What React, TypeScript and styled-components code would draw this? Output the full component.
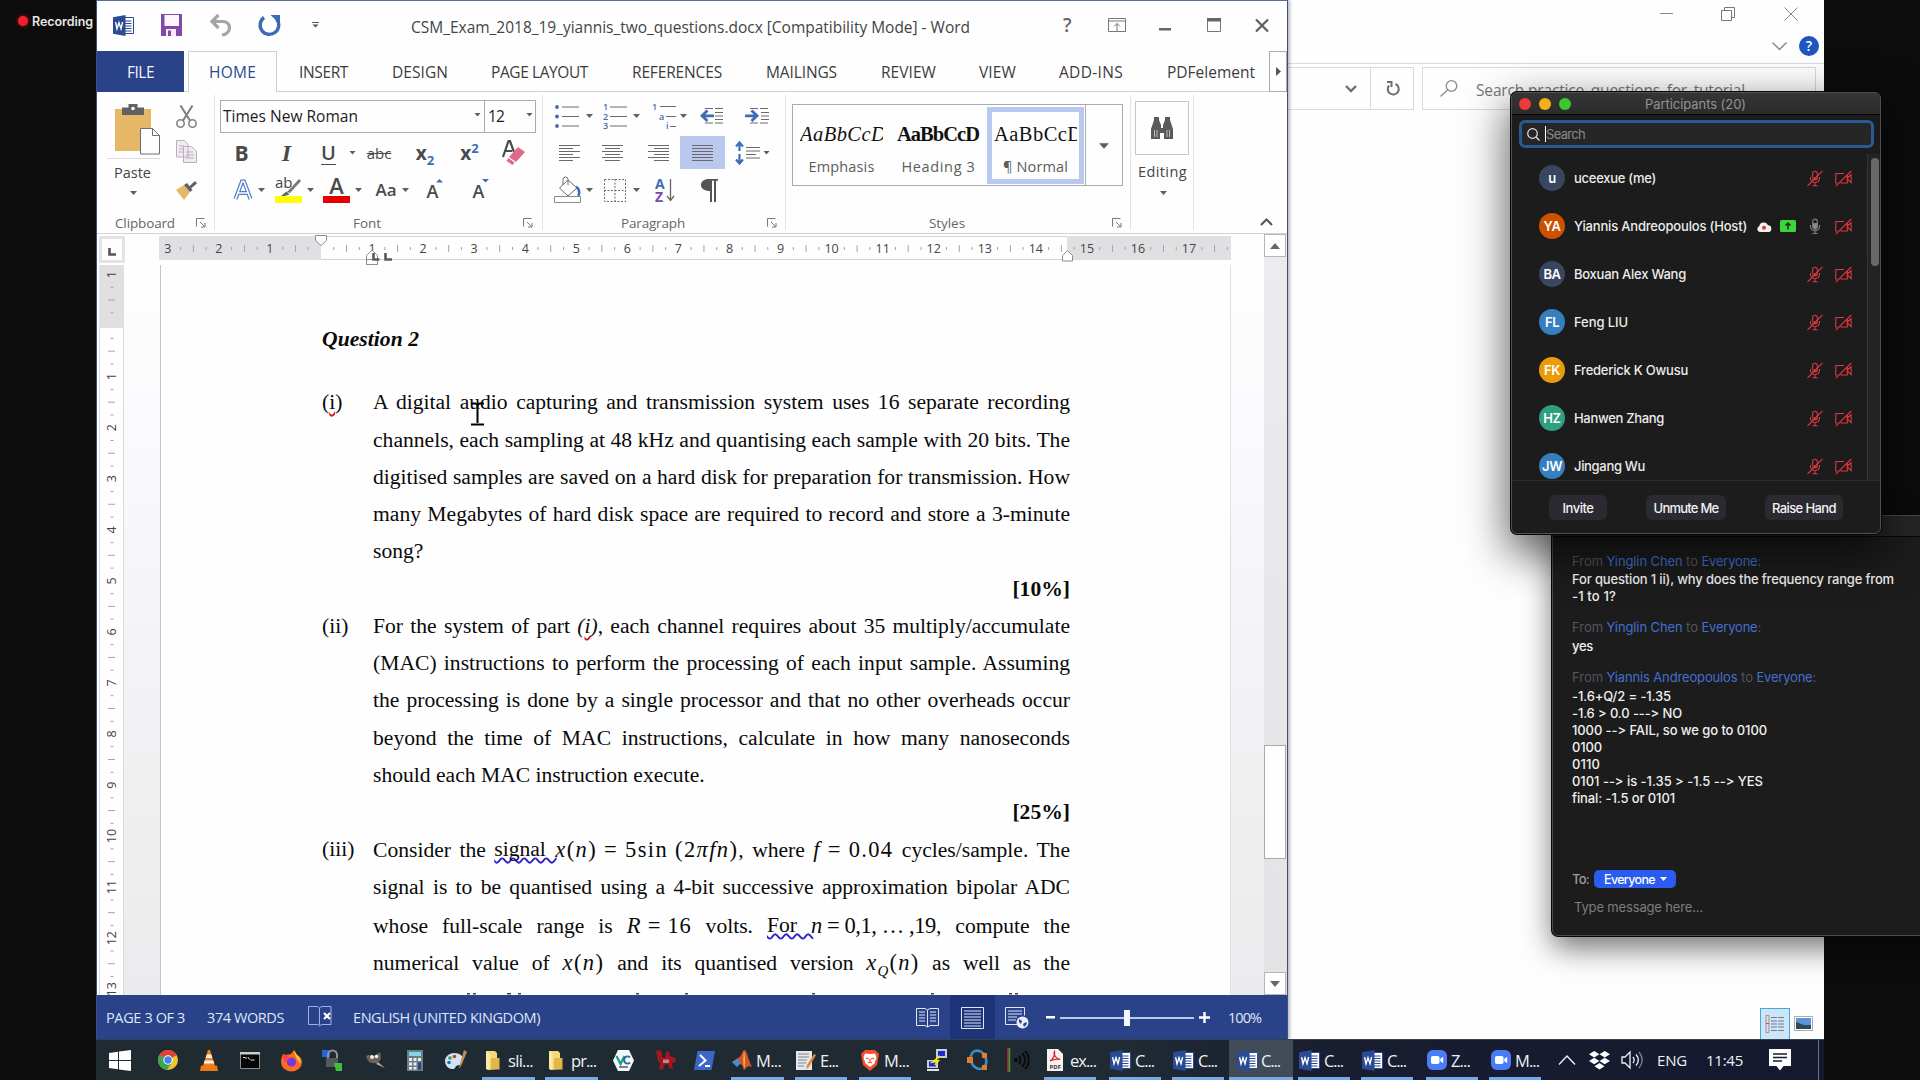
import React, { useLayoutEffect, useRef, useState } from 'react';
import styled, { createGlobalStyle, css } from 'styled-components';

const UI = `"Open Sans", "Noto Sans", sans-serif`;
const MAC = `Inter, "Liberation Sans", sans-serif`;
const SERIF = `"Liberation Serif", "Times New Roman", serif`;

const Global = createGlobalStyle`
  *, *::before, *::after { box-sizing: border-box; }
  html, body { margin: 0; padding: 0; background: #0c0c0c; overflow: hidden; }
`;

/* ---------- shared parts ---------- */

const Desktop = styled.main`
  position: relative;
  width: 1920px;
  height: 1080px;
  overflow: hidden;
  background: #0c0c0c;
  font-family: ${UI};
`;

const FitSpan = styled.span<{ $ml?: number; $mt?: number; $size?: number; $color?: string; $weight?: number; $inline?: boolean; $font?: string }>`
  display: inline-block;
  flex: none;
  white-space: pre;
  text-align: left;
  text-align-last: left;
  font-variant-ligatures: none;
  font-feature-settings: "calt" 0;
  margin-left: ${p => p.$ml || 0}px;
  ${p => p.$mt && css`margin-top: ${p.$mt}px;`}
  ${p => p.$size && css`font-size: ${p.$size}px;`}
  ${p => p.$color && css`color: ${p.$color};`}
  ${p => p.$weight && css`font-weight: ${p.$weight};`}
  ${p => p.$font && css`font-family: ${p.$font};`}
`;

type FitProps = { w: number; ml?: number; mt?: number; size?: number; color?: string; weight?: number; font?: string; children: React.ReactNode };

/* A label whose tracking is computed so that it fills its slot. */
function Fit({ w, ml, mt, size, color, weight, font, children }: FitProps) {
  const ref = useRef<HTMLSpanElement>(null);
  const [tracking, setTracking] = useState(0);
  useLayoutEffect(() => {
    const el = ref.current!;
    const range = document.createRange();
    range.selectNodeContents(el);
    const natural = range.getBoundingClientRect().width;
    const n = (el.textContent || '').length;
    setTracking((w - natural) / Math.max(1, n));
  }, []);
  return (
    <FitSpan ref={ref} $ml={ml} $mt={mt} $size={size} $color={color} $weight={weight} $font={font} style={{ width: w, letterSpacing: tracking }}>
      {children}
    </FitSpan>
  );
}

const Icon = styled.svg<{ $ml?: number; $mt?: number }>`
  display: block;
  flex: none;
  overflow: visible;
  margin-left: ${p => p.$ml || 0}px;
  margin-top: ${p => p.$mt || 0}px;
`;

const Caret = styled.i<{ $ml?: number; $mt?: number; $size?: number; $color?: string }>`
  flex: none;
  width: ${p => (p.$size || 3.5) * 2}px;
  height: ${p => (p.$size || 3.5) + 0.5}px;
  margin-left: ${p => p.$ml || 0}px;
  margin-top: ${p => p.$mt || 0}px;
  background: ${p => p.$color || '#5e5e5e'};
  clip-path: polygon(0 0, 100% 0, 50% 100%);
`;

const Row = styled.div<{ $h?: number }>`
  display: flex;
  align-items: center;
  flex: none;
  ${p => p.$h && css`height: ${p.$h}px;`}
`;

/* ---------- recording badge ---------- */

const Recording = styled.div`
  display: flex;
  align-items: center;
  gap: 4px;
  width: 96px;
  height: 42px;
  padding-left: 17.5px;
  color: #e6e6e6;
  font-family: ${MAC};
`;
const RecDot = styled.span`
  width: 10.5px;
  height: 10.5px;
  border-radius: 50%;
  background: #f3202b;
  box-shadow: 0 0 4px #b0151d;
`;

/* ---------- explorer window ---------- */

const Explorer = styled.section`
  position: absolute;
  left: 1288px;
  top: 0;
  width: 536px;
  height: 1039px;
  display: flex;
  flex-direction: column;
  background: #fefefe;
`;
const ExpTitle = styled.div`
  display: flex;
  height: 28px;
  align-items: center;
`;
const ExpRibbon = styled.div`
  display: flex;
  align-items: center;
  height: 36px;
  border-bottom: 1px solid #d9dade;
`;
const HelpDot = styled.span`
  margin-left: 12px;
  width: 20px;
  height: 20px;
  border-radius: 50%;
  background: #1f55bf;
  color: #fff;
  font: 600 14px/20px ${UI};
  text-align: center;
`;
const ExpBar = styled.div`
  display: flex;
  margin-top: 3px;
  height: 43px;
`;
const AddressBox = styled.div`
  display: flex;
  align-items: center;
  width: 126px;
  border: 1px solid #dadadd;
  border-left: 0;
`;
const AddressDivider = styled.span`
  margin-left: 13px;
  width: 1px;
  height: 41px;
  background: #dadadd;
`;
const ExpSearch = styled.div`
  display: flex;
  align-items: center;
  margin-left: 8px;
  width: 394px;
  border: 1px solid #dadadd;
`;
const ExpViews = styled.div`
  display: flex;
  align-items: center;
  margin-top: auto;
  padding-left: 472px;
`;
const ViewSelected = styled.div`
  display: flex;
  align-items: center;
  justify-content: center;
  width: 30px;
  height: 31px;
  background: #cbe6f6;
  border: 1px solid #4aa5dc;
  border-bottom: 0;
`;

/* ---------- word window ---------- */

const Word = styled.section`
  position: absolute;
  left: 96px;
  top: 0;
  width: 1192px;
  height: 1039px;
  display: flex;
  flex-direction: column;
  background: #fefefe;
  border: solid #3b4f86;
  border-width: 1px 1px 0 1px;
  border-top-color: #5a6c9e;
  box-shadow: 2px 0 3px rgba(60, 60, 80, 0.35);
`;
const TitleBar = styled.header`
  display: flex;
  align-items: center;
  flex: none;
  height: 50px;
  padding-bottom: 2px;
  color: #444;
`;
const Tabs = styled.nav`
  display: flex;
  align-items: center;
  flex: none;
  height: 41px;
  padding-top: 1px;
  color: #3c3c3c;
  font-size: 15.5px;
  box-shadow: inset 0 -1px #d0d0d2;
`;
const FileTab = styled.div`
  display: flex;
  align-items: center;
  width: 87px;
  height: 41px;
  margin-top: -1px;
  padding: 1px 0 0 30px;
  background: #2a4288;
  color: #f1f4fb;
`;
const HomeTab = styled.div`
  display: flex;
  align-items: center;
  width: 89px;
  height: 41px;
  margin: -1px 0 0 4px;
  padding-left: 20px;
  border: 1px solid #d0d0d2;
  border-bottom: 0;
  background: #fefefe;
  color: #2b4a94;
`;
const TabScroll = styled.div`
  display: flex;
  align-items: center;
  justify-content: center;
  width: 18px;
  height: 41px;
  margin: -1px 0 0 14px;
  border: 1px solid #ababab;
`;
const Ribbon = styled.div`
  display: flex;
  flex: none;
  height: 142px;
  border-bottom: 1px solid #d3d3d5;
`;
const Group = styled.div<{ $w: number }>`
  display: flex;
  flex-direction: column;
  flex: none;
  width: ${p => p.$w}px;
  background: linear-gradient(#e2e2e3, #e2e2e3) right 0 top 3px / 1px 135px no-repeat;
`;
const GroupBody = styled.div`
  display: flex;
  flex: none;
  height: 120px;
`;
const Rows = styled.div`
  flex: none;
  height: 120px;
  padding-top: 8px;
`;
const GroupFooter = styled.div`
  display: flex;
  align-items: center;
  height: 22px;
  color: #666;
  font-size: 13.5px;
`;
const PasteCol = styled.div`
  display: flex;
  flex-direction: column;
  width: 53px;
  margin: 12px 0 0 10px;
  font-size: 14.5px;
  color: #444;
`;
const PasteRule = styled.div`
  height: 1px;
  margin: 4px 0 3px;
  background: #dcdcdd;
`;
const ClipCol = styled.div`
  display: flex;
  flex-direction: column;
  width: 22px;
  margin: 13px 0 0 16px;
`;
const Combo = styled.div<{ $w: number; $open?: boolean }>`
  display: flex;
  align-items: center;
  width: ${p => p.$w}px;
  height: 33px;
  border: 1px solid #ababab;
  ${p => p.$open && css`border-left: 0;`}
  color: #1c1c1c;
`;
const Glyph = styled.span<{ $ml: number; $w: number; $size: number; $serif?: boolean; $italic?: boolean; $under?: boolean; $strike?: boolean; $weight?: number }>`
  flex: none;
  margin-left: ${p => p.$ml}px;
  width: ${p => p.$w}px;
  font: ${p => (p.$italic ? 'italic' : 'normal')} ${p => p.$weight || 700} ${p => p.$size}px/24px ${p => (p.$serif ? SERIF : UI)};
  color: #4a4a4a;
  text-align: center;
  white-space: nowrap;
  ${p => p.$under && css`text-decoration: underline; text-decoration-thickness: 1px; text-underline-offset: 4px;`}
  ${p => p.$strike && css`text-decoration: line-through; text-decoration-thickness: 1px;`}
  sub, sup { color: #3e6db5; font-size: 13px; line-height: 0; }
`;
const JustifyActive = styled.div`
  display: flex;
  align-items: center;
  justify-content: center;
  width: 45px;
  height: 33px;
  margin-left: 11px;
  background: #b9c8ec;
`;
const Gallery = styled.div`
  display: flex;
  width: 331px;
  height: 82px;
  margin: 12px 0 0 6px;
  border: 1px solid #ababab;
`;
const StyleCard = styled.div<{ $ml?: number; $on?: boolean }>`
  display: flex;
  flex-direction: column;
  align-items: center;
  width: 97px;
  height: 77px;
  margin: 2px 0 0 ${p => p.$ml || 0}px;
  border: 5px solid ${p => (p.$on ? '#b9c8ec' : 'transparent')};
  color: #5c5c5c;
  font-size: 14.5px;
`;
const Sample = styled.div<{ $bold?: boolean; $italic?: boolean }>`
  width: 83px;
  height: 28px;
  margin: 9px 0 8px;
  overflow: hidden;
  white-space: nowrap;
  color: #111;
  font: ${p => (p.$italic ? 'italic' : 'normal')} ${p => (p.$bold ? 700 : 400)} 20.5px/26px ${SERIF};
  letter-spacing: ${p => (p.$bold ? 0 : 0.45)}px;
`;
const CardLabel = styled.div`
  line-height: 19px;
`;
const GalleryMore = styled.div`
  display: flex;
  align-items: center;
  justify-content: center;
  width: 37px;
  margin-left: auto;
  border-left: 1px solid #ababab;
`;
const EditCol = styled.div`
  display: flex;
  flex-direction: column;
  margin: 9px 0 0 4px;
  font-size: 14.5px;
  color: #444;
`;
const EditBox = styled.div`
  display: flex;
  align-items: center;
  justify-content: center;
  width: 54px;
  height: 54px;
  margin-bottom: 7px;
  border: 1px solid #c6c6c8;
`;
const RibbonEnd = styled.div`
  display: flex;
  align-items: flex-end;
  padding: 0 0 7px 66px;
`;

/* ---------- workspace ---------- */

const Workspace = styled.div`
  display: grid;
  grid-template-columns: 27px 1140px 23px;
  grid-template-rows: 31px 1fr;
  flex: 1;
  min-height: 0;
`;
const TabPicker = styled.div`
  margin: 2px 0 0 2px;
  width: 26px;
  height: 27px;
  border: 3px solid #e3e3e5;
  background: #fefefe;
`;
const HRuler = styled.div`
  padding: 2px 0 0 35px;
`;
const VRuler = styled.div`
  padding-left: 2px;
  overflow: hidden;
`;
const Canvas = styled.div`
  padding-left: 36px;
  overflow: hidden;
  background: linear-gradient(#fefefe 0%, #fbfbfd 18%, #f4f3f6 50%, #efeff0 75%, #ebeaec 100%);
`;
const Page = styled.article`
  width: 1071px;
  height: 731px;
  padding: 56px 0 0 161px;
  overflow: hidden;
  background: #fefefe;
  border: solid #c4c4c6;
  border-width: 0 1px;
  border-right-color: #e0e0e2;
  color: #0a0a0a;
  font: 21.6px/37.3px ${SERIF};
`;
const Heading = styled.h2`
  margin: 0 0 26px;
  font: italic 700 21.6px/37.3px ${SERIF};
`;
const Item = styled.div`
  display: grid;
  grid-template-columns: 51px 697px;
`;
const Line = styled.div<{ $end?: boolean; $mark?: boolean; $tall?: boolean }>`
  height: ${p => (p.$tall ? 38.1 : 37.25)}px;
  white-space: nowrap;
  text-align: ${p => (p.$mark ? 'right' : 'left')};
  ${p => !p.$end && !p.$mark && css`white-space: normal; text-align: justify; text-align-last: justify;`}
  ${p => p.$mark && css`font-weight: 700;`}
`;
const Wavy = styled.span<{ $c: string; $w?: number }>`
  ${p => p.$w && css`display: inline-block; width: ${p.$w}px; height: 37px; vertical-align: top;`}
  white-space: pre;
  text-align: left;
  text-align-last: left;
  text-decoration: underline wavy ${p => p.$c} 1.5px;
  text-underline-offset: 1px;
  text-decoration-skip-ink: none;
`;
const Sub = styled.sub`
  font-size: 15px;
  line-height: 0;
`;
const Scroll = styled.div`
  display: flex;
  flex-direction: column;
  grid-column: 3;
  grid-row: 1 / 3;
  background: linear-gradient(#ecebee, #e3e3e5);
`;
const ScrollBtn = styled.div`
  display: flex;
  align-items: center;
  justify-content: center;
  width: 22px;
  height: 23px;
  border: 1px solid #b5b5b8;
  background: #fefefe;
`;
const Thumb = styled.div`
  width: 22px;
  height: 114px;
  margin: 488px 0 auto;
  border: 1px solid #a9a9ac;
  background: #fefefe;
`;
const IBeam = styled.svg`
  position: absolute;
  left: 374px;
  top: 401px;
`;
const Status = styled.footer`
  display: flex;
  align-items: center;
  flex: none;
  height: 44px;
  padding-top: 1px;
  background: #2a4289;
  color: #dde7f7;
  font-size: 14.5px;
`;
const ActiveView = styled.div`
  display: flex;
  align-items: center;
  width: 45px;
  height: 44px;
  margin: -1px 0 0 11px;
  padding: 1px 0 0 11px;
  background: #1f3478;
`;
const Slider = styled.div`
  display: flex;
  align-items: center;
  justify-content: center;
  width: 134px;
  height: 16px;
  margin-left: 5px;
  background: linear-gradient(#b9c9ec, #b9c9ec) center / 100% 2px no-repeat;
`;
const Knob = styled.span`
  width: 6px;
  height: 16px;
  background: #f4f8fe;
`;

/* ---------- taskbar ---------- */

const Taskbar = styled.div`
  position: absolute;
  left: 96px;
  top: 1039px;
  width: 1728px;
  height: 41px;
  display: flex;
  align-items: center;
  border-top: 1px solid #35414d;
  background: linear-gradient(90deg, #1f2b31 0%, #1f2a33 60%, #181d30 72%, #151930 100%);
  color: #eef1f4;
  font-size: 16.5px;
`;
const Task = styled.div<{ $ml: number; $w: number; $pad: number; $on?: boolean }>`
  display: flex;
  align-items: center;
  flex: none;
  width: ${p => p.$w}px;
  height: 40px;
  margin-left: ${p => p.$ml}px;
  padding-left: ${p => p.$pad}px;
  background: ${p => (p.$on ? '#414b57' : 'transparent')};
  box-shadow: inset 0 -3px #76a9e6;
`;
const DesktopEdge = styled.span`
  width: 1px;
  height: 40px;
  margin-left: 27px;
  background: #6b7084;
`;

/* ---------- zoom windows ---------- */

const Chat = styled.section`
  position: absolute;
  left: 1552px;
  top: 515px;
  width: 375px;
  height: 421px;
  display: flex;
  flex-direction: column;
  border: 1px solid #4c4c4c;
  border-radius: 6px;
  background: #1c1c1c;
  box-shadow: 0 0 0 1px #060606, 0 12px 30px rgba(0, 0, 0, 0.55);
  font: 500 13px/17px ${MAC};
  color: #f0f0f0;
`;
const ChatTitle = styled.div`
  flex: none;
  height: 21px;
  border-bottom: 1px solid #070707;
  border-radius: 6px 6px 0 0;
  background: #262626;
`;
const ChatLog = styled.div`
  display: flex;
  flex-direction: column;
  align-items: flex-start;
  padding: 15.5px 0 0 19px;
  height: 324px;
`;
const From = styled.div<{ $mt?: number }>`
  display: flex;
  height: 17px;
  margin: ${p => p.$mt || 0}px 0 1.5px;
  color: #56545f;
  font-weight: 400;
`;
const ToRow = styled.div`
  display: flex;
  align-items: center;
  height: 20px;
  margin-top: 8px;
  padding-left: 19px;
  color: #9c9aa6;
`;
const ToPill = styled.div`
  display: flex;
  align-items: center;
  width: 82px;
  height: 18px;
  margin-left: 5px;
  padding-left: 10px;
  border-radius: 5px;
  background: #2a5cf0;
  color: #fff;
`;
const Compose = styled.div`
  display: flex;
  margin-top: 9.5px;
  padding-left: 21px;
  color: #7d7d7d;
  font-weight: 400;
`;

const Participants = styled.section`
  position: absolute;
  left: 1511px;
  top: 92px;
  width: 370px;
  height: 442px;
  display: flex;
  flex-direction: column;
  border: 1px solid #505050;
  border-radius: 6px;
  background: #1c1c1c;
  box-shadow: 0 0 0 1px #060606, 0 16px 44px 4px rgba(0, 0, 0, 0.62);
  font: 500 13px/16px ${MAC};
  color: #ececec;
`;
const PTitle = styled.div`
  display: flex;
  align-items: center;
  flex: none;
  height: 22px;
  padding-left: 7px;
  gap: 8px;
  border-bottom: 1px solid #050505;
  border-radius: 5px 5px 0 0;
  background: linear-gradient(#353535, #2b2b2b);
`;
const Light = styled.span<{ $c: string }>`
  width: 12px;
  height: 12px;
  border-radius: 50%;
  background: ${p => p.$c};
`;
const PSearch = styled.div`
  display: flex;
  align-items: center;
  flex: none;
  width: 355px;
  height: 28px;
  margin: 5px 0 0 7px;
  padding-left: 5px;
  border: 3.5px solid #2a5a96;
  border-radius: 6px;
  background: #262626;
  font-weight: 400;
`;
const TextCaret = styled.span`
  width: 1px;
  height: 16px;
  margin-left: 5px;
  background: #fff;
`;
const PBody = styled.div`
  display: flex;
  flex: none;
  height: 328px;
  margin-top: 5px;
  border-bottom: 1px solid #2b2b2b;
  overflow: hidden;
`;
const PList = styled.div`
  width: 355px;
  padding-top: 1px;
`;
const PTrack = styled.div`
  width: 13px;
  margin-top: 1px;
  padding: 4px 0 0 3px;
  border-left: 1px solid #363636;
  background: #232323;
`;
const PThumb = styled.div`
  width: 8px;
  height: 108px;
  border-radius: 4px;
  background: #686868;
`;
const PRow = styled.div`
  display: flex;
  align-items: center;
  height: 48px;
  padding-left: 27px;
`;
const Avatar = styled.span<{ $c: string }>`
  flex: none;
  width: 26px;
  height: 26px;
  margin-right: 9px;
  border-radius: 50%;
  background: ${p => p.$c};
  color: #fff;
  font: 600 13px/27px ${MAC};
  letter-spacing: -0.4px;
  text-align: center;
`;
const PIcons = styled.div`
  display: flex;
  align-items: center;
  margin-left: auto;
  padding-right: 15px;
`;
const PFooter = styled.div`
  display: flex;
  padding: 14px 0 0 37px;
`;
const PButton = styled.button<{ $w: number; $ml?: number }>`
  display: flex;
  align-items: center;
  justify-content: center;
  width: ${p => p.$w}px;
  height: 25px;
  margin-left: ${p => p.$ml || 0}px;
  padding: 1px 0 0;
  border: 0;
  border-radius: 6px;
  background: #2a2a30;
  color: #f2f2f2;
  font: 500 13px/16px ${MAC};
`;

/* ---------- drawings ---------- */

const WordLogo = ({ ml = 0, size = 21 }: { ml?: number; size?: number }) => (
  <Icon $ml={ml} width={size} height={size} viewBox="0 0 21 21">
    <path d="M11 2.5h9.5v16H11z" fill="#fff" stroke="#2b4a94" strokeWidth="1" />
    <path d="M12 6h6.5M12 8.5h6.5M12 11h6.5M12 13.5h6.5M12 16h6.5" stroke="#2b4a94" strokeWidth="1" />
    <path d="M0 2.3L12.5 0v21L0 18.7z" fill="#2b4a94" />
    <path d="M2.6 7.2l1.4 6.6 2-6 2 6 1.6-6.8" fill="none" stroke="#fff" strokeWidth="1.4" />
  </Icon>
);

const Lines = ({ ml = 0, rows }: { ml?: number; rows: [number, number][] }) => (
  <Icon $ml={ml} width="21" height="16" viewBox="0 0 21 16">
    {rows.map(([a, b], i) => <path key={i} d={`M${a} ${i * 3 + 0.5}H${b}`} stroke="#6a6a6c" strokeWidth="1" />)}
  </Icon>
);

const Launcher = ({ ml }: { ml: number }) => (
  <Icon $ml={ml} width="10" height="10" viewBox="0 0 10 10" fill="none" stroke="#777">
    <path d="M.5 8.5V.5H8.5M4 4l4.5 4.5M9 5v4H5" />
  </Icon>
);

const CM = 51.06;

function HorizontalRuler() {
  const zero = 162;
  const marks: React.ReactNode[] = [];
  for (let q = -13; q <= 72; q++) {
    const x = zero + (q * CM) / 4;
    if (x < 2 || x > 1070 || q === 0) continue;
    if (q % 4 === 0) {
      marks.push(<text key={q} x={x} y="17" textAnchor="middle" fontSize="12.5" fill="#444">{Math.abs(q / 4)}</text>);
    } else {
      const half = q % 2 === 0;
      marks.push(<path key={q} d={`M${x} ${half ? 9 : 11}v${half ? 7 : 3}`} stroke="#a4a4a8" />);
    }
  }
  return (
    <Icon width="1072" height="25" viewBox="0 0 1072 25">
      <path d="M0 0h1072v24H0z" fill="#e0e0e2" />
      <path d="M162 .5h746v23H162z" fill="#fefefe" />
      <path d="M162 .5h746M162 23.5h746" stroke="#d4d4d6" />
      {marks}
      <path d="M156.500 -.5h11v5l-5.500 5-5.500-5z" fill="#fff" stroke="#8c8c8e" />
      <path d="M207.500 28.500v-9l5.500-5.500 5.500 5.500v9zM207.500 23.500h11" fill="#fff" stroke="#8c8c8e" />
      <path d="M214.500 17v6.500h6M226.500 17v6.500h6.500" fill="none" stroke="#5a5a5c" strokeWidth="2.600" />
      <path d="M903.500 25v-5.500l5-5 5 5V25z" fill="#fff" stroke="#8c8c8e" />
    </Icon>
  );
}

function VerticalRuler() {
  const zero = 60.6;
  const step = 51.05;
  const marks: React.ReactNode[] = [];
  for (let q = -4; q <= 52; q++) {
    const y = zero + (q * step) / 4;
    if (q === 0) continue;
    if (q % 4 === 0) {
      marks.push(<text key={q} transform={`translate(17 ${y}) rotate(-90)`} textAnchor="middle" fontSize="12.500" fill="#444">{Math.abs(q / 4)}</text>);
    } else {
      const half = q % 2 === 0;
      marks.push(<path key={q} d={`M${half ? 9 : 11.5} ${y}h${half ? 7 : 3}`} stroke="#a4a4a8" />);
    }
  }
  return (
    <Icon width="25" height="731" viewBox="0 0 25 731">
      <path d="M.5 0h24v731H.5z" fill="#fefefe" stroke="#d9d9db" />
      <path d="M0 0h25v63H0z" fill="#e0e0e2" />
      {marks}
    </Icon>
  );
}

const MicOff = () => (
  <Icon width="16" height="17" viewBox="0 0 16 17" fill="none" stroke="#d83a42" strokeWidth="1.100">
    <rect x="5.700" y="1.200" width="4.600" height="8.600" rx="2.300" />
    <path d="M3.500 7v1.300a4.500 4.500 0 0 0 9 0V7M8 12.800v2.700M5.300 15.700h5.400M.5 16L15.500.8" />
    <path d="M7 7.500h2.500v2H7z" fill="#d83a42" stroke="none" />
  </Icon>
);
const MicOn = () => (
  <Icon width="16" height="17" viewBox="0 0 16 17" fill="none" stroke="#7d7d7d" strokeWidth="1.200">
    <rect x="5.700" y="1.200" width="4.600" height="9" rx="2.300" />
    <path d="M6 5.500h4v3.700a2 2 0 0 1-4 0z" fill="#8a8a8a" />
    <path d="M3.500 7v1.300a4.500 4.500 0 0 0 9 0V7M8 12.800v2.500M5.300 15.500h5.400" />
  </Icon>
);
const CamOff = () => (
  <Icon $ml={12} width="17" height="17" viewBox="0 0 17 17" fill="none" stroke="#e2353e" strokeWidth="1.100">
    <path d="M9 3.500H.8v9.500h1.700M5.500 13h6.800V4.500M12.500 8l3.600-3.500v8L12.500 9.500M.8 16.200L16.200 1" />
  </Icon>
);

const Folder = () => (
  <Icon width="14" height="19" viewBox="0 0 14 19">
    <path d="M0 0h9l2 2v16l-9 1-2-1z" fill="#f6d978" />
    <path d="M5 7h8.500v11.500L5 18.500z" fill="#e3b64c" />
    <path d="M0 0l3.500 2.500V19L0 17.500z" fill="#fbe9a6" />
  </Icon>
);
const ZoomLogo = () => (
  <Icon width="20" height="20" viewBox="0 0 20 20">
    <rect width="20" height="20" rx="6" fill="#4a7cf8" />
    <rect x="4" y="6" width="8.500" height="8" rx="1.800" fill="#fff" />
    <path d="M13.200 9l3-2.300v6.600l-3-2.300z" fill="#fff" />
  </Icon>
);

/* ---------- window content ---------- */

const TABS: [string, number, number][] = [
  ['INSERT', 22, 49], ['DESIGN', 44, 56], ['PAGE LAYOUT', 43, 97], ['REFERENCES', 44, 90], ['MAILINGS', 44, 71],
  ['REVIEW', 44, 55], ['VIEW', 43, 37], ['ADD-INS', 43, 64], ['PDFelement', 44, 88],
];

function WordTitleBar() {
  return (
    <TitleBar>
      <WordLogo ml={16} />
      <Icon $ml={27} width="21" height="22" viewBox="0 0 21 22">
        <path d="M0 0h21v22H0z" fill="#7f4aa8" />
        <path d="M3.500 1h14.500v11H3.500z" fill="#fbf5fc" />
        <path d="M5 15h10v7H5z" fill="#f6ecf8" />
        <path d="M7 16.500h3v5.500H7z" fill="#7f4aa8" />
      </Icon>
      <Icon $ml={28} width="21" height="22" viewBox="0 0 21 22" fill="none" stroke="#a8a3a8" strokeWidth="3.200">
        <path d="M2 7.500h11c4 0 6.500 3 6.500 6 0 4-3 7-7.500 7.500" /><path d="M8.500 1L2 7.500 8.500 14" />
      </Icon>
      <Icon $ml={27} width="23" height="22" viewBox="0 0 23 22">
        <path d="M6 3.500A9.300 9.300 0 1 0 18.500 5" fill="none" stroke="#3b6cb3" strokeWidth="3.400" />
        <path d="M12.500 1H22v9z" fill="#3b6cb3" />
      </Icon>
      <Icon $ml={31} width="7" height="6" viewBox="0 0 7 6"><path d="M0 .5h7" stroke="#555" /><path d="M.5 2.500h6l-3 3z" fill="#555" /></Icon>
      <Fit ml={92} mt={4} w={559} size={15.5}>CSM_Exam_2018_19_yiannis_two_questions.docx [Compatibility Mode] - Word</Fit>
      <Fit ml={93} w={10} size={19} weight={600} color="#666">?</Fit>
      <Icon $ml={35} width="18" height="14" viewBox="0 0 18 14" fill="none" stroke="#777"><path d="M.5.5h17v13H.5zM.5 3h17M9 13V5.500M6 8.500l3-3 3 3" /></Icon>
      <Icon $ml={33} $mt={8} width="12" height="3"><path d="M0 0h12v2.500H0z" fill="#666" /></Icon>
      <Icon $ml={36} width="14" height="14" viewBox="0 0 14 14"><path d="M.5.5h13v13H.5z" fill="none" stroke="#777" /><path d="M0 0h14v3.500H0z" fill="#666" /></Icon>
      <Icon $ml={34} width="14" height="13" viewBox="0 0 14 13"><path d="M1 .5l12 12M13 .5l-12 12" stroke="#5e5e5e" strokeWidth="2.200" /></Icon>
    </TitleBar>
  );
}

function ClipboardGroup() {
  return (
    <Group $w={118}>
      <GroupBody>
        <PasteCol>
          <Icon $ml={8} width="45" height="50" viewBox="0 0 45 50">
            <path d="M0 5h36v42H0z" fill="#e4b866" />
            <path d="M7 3.500h6.500V0h9v3.500H29V11H7z" fill="#616164" /><circle cx="18" cy="4.500" r="1.800" fill="#fff" />
            <path d="M25.500 24.500h12l7 7V50h-19z" fill="#fefefe" stroke="#6e6e70" /><path d="M37.500 24.500v7h7" fill="none" stroke="#6e6e70" />
          </Icon>
          <PasteRule />
          <Fit ml={7} mt={1} w={37}>Paste</Fit>
          <Caret $ml={23} $mt={9} />
        </PasteCol>
        <ClipCol>
          <Icon width="21" height="23" viewBox="0 0 21 23" fill="none" stroke="#858287" strokeWidth="1.600">
            <path d="M4.500.5l9.500 15M16.500.5L7 15.500" strokeWidth="2.200" /><circle cx="4.500" cy="18.500" r="3.700" /><circle cx="16.500" cy="18.500" r="3.700" />
          </Icon>
          <Icon $mt={12} width="21" height="23" viewBox="0 0 21 23" fill="#f2eaf3" stroke="#b9b0ba">
            <path d="M.5.5h8l3.500 3.500v13H.5zM7.500 6.500h8l5 4.500v11.500h-13z" /><path d="M3 6h5M3 9h4M3 12h4M10 12h7M10 15h8M10 18h8" />
          </Icon>
          <Icon $mt={18} width="21" height="19" viewBox="0 0 21 19">
            <path d="M0 9l8-5 6 7-6 8z" fill="#e4b866" /><path d="M8 4l3-2 5.500 7-2.500 2z" fill="#616164" /><path d="M13 5.500L19 0l2 2.500-6 5z" fill="#616164" />
          </Icon>
        </ClipCol>
      </GroupBody>
      <GroupFooter><Fit ml={18} w={60}>Clipboard</Fit><Launcher ml={21} /></GroupFooter>
    </Group>
  );
}

function FontGroup() {
  return (
    <Group $w={328}>
      <Rows>
        <Row $h={32}>
          <FitSpan $ml={5} />
          <Combo $w={265}><Fit ml={2} w={135} size={15.5}>Times New Roman</Fit><Caret $ml={116} $mt={-3} /></Combo>
          <Combo $w={51} $open><Fit ml={3} w={16} size={15.5}>12</Fit><Caret $ml={22} $mt={-3} /></Combo>
        </Row>
        <Row $h={41}>
          <Glyph $ml={19} $w={15} $size={21}>B</Glyph>
          <Glyph $ml={32} $w={11} $size={24} $serif $italic>I</Glyph>
          <Glyph $ml={28} $w={17} $size={20} $under $weight={600}>U</Glyph>
          <Caret $ml={12} />
          <Glyph $ml={10} $w={26} $size={15} $strike $weight={400}>abc</Glyph>
          <Glyph $ml={22} $w={22} $size={19}>x<sub>2</sub></Glyph>
          <Glyph $ml={23} $w={21} $size={19}>x<sup>2</sup></Glyph>
          <Icon $ml={22} width="23" height="25" viewBox="0 0 23 25">
            <path d="M1 17L6.500 1h1.500l4 11M3 11h7" fill="none" stroke="#4a4a4a" strokeWidth="2.200" />
            <path d="M16 7l7 5-9 10-7-5z" fill="#dc6a8a" /><path d="M6.500 18l6 4.500-2 2.500-6-4z" fill="#dc6a8a" />
          </Icon>
        </Row>
        <Row $h={34}>
          <Icon $ml={19} width="18" height="20" viewBox="0 0 18 20" fill="none">
            <path d="M1.500 19L8 1.500h2L16.500 19M4.500 13h9" stroke="#4b7cc4" strokeWidth="4" /><path d="M1.500 19L8 1.500h2L16.500 19M4.500 13h9" stroke="#fff" strokeWidth="1.700" />
          </Icon>
          <Caret $ml={6} />
          <Icon $ml={10} width="27" height="26" viewBox="0 0 27 26">
            <text x="0" y="11" fontSize="15" fontFamily="Open Sans" fill="#444">ab</text>
            <path d="M0 19h27v7H0z" fill="#ff0" /><path d="M24 2l2 2-11 12-3-1z" fill="#777" /><path d="M11.500 14.500l3 3-5 1.500H6z" fill="#616164" />
          </Icon>
          <Caret $ml={5} />
          <Icon $ml={9} width="27" height="26" viewBox="0 0 27 26">
            <text x="13.500" y="17" fontSize="22" fontWeight="600" textAnchor="middle" fontFamily="Open Sans" fill="#4a4a4a">A</text>
            <path d="M0 19h27v7H0z" fill="#e60000" />
          </Icon>
          <Caret $ml={5} />
          <Glyph $ml={13} $w={22} $size={17} $weight={600}>Aa</Glyph>
          <Caret $ml={5} />
          <Icon $ml={17} width="17" height="22" viewBox="0 0 17 22">
            <text x="6.500" y="19" fontSize="18" fontWeight="600" textAnchor="middle" fontFamily="Open Sans" fill="#4a4a4a">A</text><path d="M10 3.500h7L13.500 0z" fill="#3e6db5" />
          </Icon>
          <Icon $ml={29} width="17" height="22" viewBox="0 0 17 22">
            <text x="6.500" y="19" fontSize="18" fontWeight="600" textAnchor="middle" fontFamily="Open Sans" fill="#4a4a4a">A</text><path d="M10 0h7l-3.500 3.500z" fill="#3e6db5" />
          </Icon>
        </Row>
      </Rows>
      <GroupFooter><Fit ml={138} w={28}>Font</Fit><Launcher ml={142} /></GroupFooter>
    </Group>
  );
}

function ParagraphGroup() {
  return (
    <Group $w={243}>
      <Rows>
        <Row $h={32}>
          <Icon $ml={12} width="24" height="23" viewBox="0 0 24 23">
            {[2, 11.5, 21].map(y => <g key={y}><circle cx="2" cy={y} r="1.900" fill="#3e6db5" /><path d={`M7 ${y}h17`} stroke="#6a6a6c" /></g>)}
          </Icon>
          <Caret $ml={7} />
          <Icon $ml={10} width="24" height="24" viewBox="0 0 24 24">
            {[3, 12.5, 22].map((y, i) => <g key={y}><text x="0" y={y + 3} fontSize="9" fontWeight="600" fontFamily="Open Sans" fill="#3e6db5">{i + 1}</text><path d={`M7 ${y}h17`} stroke="#6a6a6c" /></g>)}
          </Icon>
          <Caret $ml={6} />
          <Icon $ml={12} width="24" height="25" viewBox="0 0 24 25" fontSize="9" fontWeight="600" fontFamily="Open Sans">
            <text x="0" y="6" fill="#3e6db5">1</text><text x="7" y="16" fill="#3e6db5">a</text><text x="14" y="25" fill="#3e6db5">i</text>
            <path d="M8 2.500h16M14 12.500h10M18 22.500h6" stroke="#6a6a6c" />
          </Icon>
          <Caret $ml={4} />
          <Icon $ml={13} width="25" height="16" viewBox="0 0 25 16">
            <path d="M5 .5h20M15 4.500h10M15 8h10M15 11.500h10M5 15h20" stroke="#6a6a6c" strokeDasharray="8 2" />
            <path d="M14 7.800H2M7.500 2.500L2 7.800l5.500 5.300" fill="none" stroke="#3e6db5" strokeWidth="2.800" />
          </Icon>
          <Icon $ml={20} width="25" height="16" viewBox="0 0 25 16">
            <path d="M5 .5h20M16 4.500h9M16 8h9M16 11.500h9M5 15h20" stroke="#6a6a6c" strokeDasharray="8 2" />
            <path d="M0 7.800h12M6.500 2.500L12 7.800l-5.500 5.300" fill="none" stroke="#3e6db5" strokeWidth="2.800" />
          </Icon>
        </Row>
        <Row $h={41}>
          <Lines ml={16} rows={[[0, 21], [0, 14], [0, 21], [0, 14], [0, 21], [0, 14]]} />
          <Lines ml={22} rows={[[0, 21], [3, 18], [0, 21], [3, 18], [0, 21], [3, 18]]} />
          <Lines ml={25} rows={[[0, 21], [6, 21], [0, 21], [6, 21], [0, 21], [6, 21]]} />
          <JustifyActive><Lines rows={[[0, 21], [0, 21], [0, 21], [0, 21], [0, 21], [0, 21]]} /></JustifyActive>
          <Icon $ml={10} width="25" height="24" viewBox="0 0 25 24">
            <path d="M11 6.500h14M11 10h14M11 13.500h10M11 17h14" stroke="#6a6a6c" />
            <path d="M4.500 10V2M1 5.500L4.500 1.500 8 5.500M4.500 13v9M1 18.500l3.500 4 3.500-4" fill="none" stroke="#3e6db5" strokeWidth="2.200" />
          </Icon>
          <Caret $ml={3} />
        </Row>
        <Row $h={34}>
          <Icon $ml={11} width="27" height="26" viewBox="0 0 27 26" fill="none">
            <path d="M5.500 11L14 3l9 8-9 8z" fill="#fff" stroke="#6a6a6c" /><path d="M9 8V2.500a2.500 2.500 0 0 1 5 0V8" stroke="#6a6a6c" />
            <path d="M22 10c3 1 4 5 2.500 9" stroke="#3e6db5" strokeWidth="2.600" /><path d="M.5 19.500h26v6H.5z" fill="#fff" stroke="#8a8a8c" />
          </Icon>
          <Caret $ml={5} />
          <Icon $ml={11} width="22" height="23" viewBox="0 0 22 23" fill="none" stroke="#6a6a6c"><path d="M.5.5h21v22H.5zM11 0v23M0 11.500h22" strokeDasharray="2 1.500" /></Icon>
          <Caret $ml={7} />
          <Icon $ml={15} width="20" height="25" viewBox="0 0 20 25" fontSize="14" fontWeight="700" fontFamily="Open Sans">
            <text x="0" y="11" fill="#3e6db5">A</text><text x="0" y="24" fill="#7a49b0">Z</text><path d="M15.500 1v21M12 18l3.500 4.500L19 18" fill="none" stroke="#666" strokeWidth="1.300" />
          </Icon>
          <Icon $ml={26} width="17" height="23" viewBox="0 0 17 23"><path d="M17 0v1.800h-2V23h-2V1.800h-2V23H9V12C3 12 0 9.500 0 6s3-6 8-6z" fill="#555" /></Icon>
        </Row>
      </Rows>
      <GroupFooter><Fit ml={78} w={64}>Paragraph</Fit><Launcher ml={82} /></GroupFooter>
    </Group>
  );
}

function StylesGroup() {
  return (
    <Group $w={345}>
      <GroupBody>
        <Gallery>
          <StyleCard><Sample $italic>AaBbCcD</Sample><CardLabel><Fit w={66}>Emphasis</Fit></CardLabel></StyleCard>
          <StyleCard><Sample $bold><Fit w={82}>AaBbCcD</Fit></Sample><CardLabel><Fit w={74}>Heading 3</Fit></CardLabel></StyleCard>
          <StyleCard $on><Sample>AaBbCcD</Sample><CardLabel><Fit w={65}>¶ Normal</Fit></CardLabel></StyleCard>
          <GalleryMore><Caret $size={5} $mt={2} /></GalleryMore>
        </Gallery>
      </GroupBody>
      <GroupFooter><Fit ml={143} w={36}>Styles</Fit><Launcher ml={147} /></GroupFooter>
    </Group>
  );
}

function EditingGroup() {
  return (
    <Group $w={63}>
      <EditCol>
        <EditBox>
          <Icon width="24" height="22" viewBox="0 0 24 22" fill="#5a5a5c">
            <path d="M4 0h5v3l2 5v3h2V8l2-5V0h5v3l3 9v10h-9v-6h-4v6H1V12l3-9z" /><path d="M4.500 13v7M7 13v7M17 13v7M19.500 13v7" stroke="#fff" strokeWidth=".6" />
          </Icon>
        </EditBox>
        <Fit ml={3} w={49}>Editing</Fit>
        <Caret $ml={25} $mt={10} />
      </EditCol>
    </Group>
  );
}

function Document() {
  return (
    <Page>
      <Heading><Fit w={97}>Question 2</Fit></Heading>
      <Item>
        <div>(<Wavy $c="#d0131f">i</Wavy>)</div>
        <div>
          <Line>A digital audio capturing and transmission system uses 16 separate recording</Line>
          <Line>channels, each sampling at 48 kHz and quantising each sample with 20 bits. The</Line>
          <Line>digitised samples are saved on a hard disk for preparation for transmission. How</Line>
          <Line>many Megabytes of hard disk space are required to record and store a 3-minute</Line>
          <Line $end>song?</Line>
          <Line $mark>[10%]</Line>
        </div>
      </Item>
      <Item>
        <div>(ii)</div>
        <div>
          <Line>For the system of part <i>(<Wavy $c="#d0131f">i</Wavy>)</i>, each channel requires about 35 multiply/accumulate</Line>
          <Line>(MAC) instructions to perform the processing of each input sample. Assuming</Line>
          <Line>the processing is done by a single processor and that no other overheads occur</Line>
          <Line>beyond the time of MAC instructions, calculate in how many nanoseconds</Line>
          <Line $end>should each MAC instruction execute.</Line>
          <Line $mark>[25%]</Line>
        </div>
      </Item>
      <Item>
        <div>(iii)</div>
        <div>
          <Line $tall>Consider the <Wavy $c="#2b1fd0" $w={61}>signal  </Wavy><Fit w={183} size={22.5}><i>x</i>(<i>n</i>) = 5sin (2<i>πfn</i>)</Fit>, where <Fit w={80} size={22.5}><i>f</i> = 0.04</Fit> cycles/sample. The</Line>
          <Line>signal is to be quantised using a 4-bit successive approximation bipolar ADC</Line>
          <Line>whose full-scale range is <Fit w={65} size={22.5}><i>R</i> = 16</Fit> volts. <Wavy $c="#2b1fd0" $w={44}>For   </Wavy><Fit w={125} size={22.5}><i>n</i> = 0,1, … ,19</Fit>, compute the</Line>
          <Line>numerical value of <Fit w={42} size={22.5}><i>x</i>(<i>n</i>)</Fit> and its quantised version <Fit w={53} size={22.5}><i>x</i><Sub><i>Q</i></Sub>(<i>n</i>)</Fit> as well as the</Line>
          <Icon width="697" height="14" viewBox="0 0 697 14">
            <path d="M94 12.800h3M100 12.800h3M134 12.800h4M145 12.800h3M263 12.800h3M312 12.800h3M439 12.800h3M558 12.800h3M636 12.800h3M642 12.800h3" stroke="#444" strokeWidth="1.500" />
          </Icon>
        </div>
      </Item>
    </Page>
  );
}

function StatusBar() {
  return (
    <Status>
      <Fit ml={9} w={79}>PAGE 3 OF 3</Fit>
      <Fit ml={22} w={77}>374 WORDS</Fit>
      <Icon $ml={24} $mt={-3} width="24" height="20" viewBox="0 0 24 20" fill="none" stroke="#9fb4e2">
        <path d="M.5.500h9l2 1.500 2-1.500h9.500v18H13.500l-2 1.500-2-1.500h-9zM11.500 2v17" /><path d="M16 7l6 6M22 7l-6 6" stroke="#fff" strokeWidth="2.200" />
      </Icon>
      <Fit ml={21} w={187}>ENGLISH (UNITED KINGDOM)</Fit>
      <Icon $ml={376} width="23" height="20" viewBox="0 0 23 20" fill="none" stroke="#dde7f7">
        <path d="M.5.5h8.500l2.500 1.500L14 .5h8.500v17H14L11.500 19 9 17.500H.5zM11.500 2v17M3 4h6M3 7h6M3 10h6M3 13h6M14 4h6M14 7h6M14 10h6M14 13h6" />
      </Icon>
      <ActiveView>
        <Icon width="23" height="22" viewBox="0 0 23 22" fill="none" stroke="#dde7f7"><path d="M.5.5h22v21H.5zM3 4h17M3 7h17M3 10h17M3 13h17M3 16h17M3 19h17" /></Icon>
      </ActiveView>
      <Icon $ml={10} width="24" height="22" viewBox="0 0 24 22" fill="none" stroke="#dde7f7">
        <path d="M12 17.500H.5V.5h19v8M3 4h14M3 7h14M3 10h9M3 13h8" /><circle cx="17.500" cy="15.500" r="6" fill="#e6effb" stroke="none" /><path d="M14 12l3 2-1 3-2-2zM18 17l3-2 1 2-3 3z" fill="#2a4289" stroke="none" />
      </Icon>
      <Icon $ml={17} width="9" height="3"><path d="M0 0h9v2.500H0z" fill="#fff" /></Icon>
      <Slider><Knob /></Slider>
      <Icon $ml={5} width="11" height="11" viewBox="0 0 11 11"><path d="M0 5.500h11M5.500 0v11" stroke="#fff" strokeWidth="2.400" /></Icon>
      <Fit ml={18} w={33}>100%</Fit>
    </Status>
  );
}

function TaskbarRow() {
  return (
    <Taskbar>
      <Icon $ml={13} width="22" height="21" viewBox="0 0 22 21" fill="#fff"><path d="M0 3l9-1.300v8.300H0zM10 1.500L22 0v10H10zM0 11h9v8.300L0 18zM10 11h12v10l-12-1.500z" /></Icon>
      <Icon $ml={27} width="20" height="20" viewBox="0 0 20 20">
        <circle cx="10" cy="10" r="10" fill="#f2c32c" /><path d="M10 10L1.300 5A10 10 0 0 1 18.700 5z" fill="#dc4236" /><path d="M10 10L1.300 5A10 10 0 0 0 9 20l5-8z" fill="#3ba455" />
        <circle cx="10" cy="10" r="4.700" fill="#fff" /><circle cx="10" cy="10" r="3.700" fill="#4384ee" />
      </Icon>
      <Icon $ml={22} width="18" height="21" viewBox="0 0 18 21">
        <path d="M8 0h2l5 16H3z" fill="#f0851c" /><path d="M6.800 4.500h4.400l1.200 3.500H5.600zM4.700 10.500h8.600l1 3H3.700z" fill="#f4f0ea" /><path d="M1 15.500h16l1 5.500H0z" fill="#ee7a12" />
      </Icon>
      <Icon $ml={22} width="20" height="17" viewBox="0 0 20 17"><path d="M.5.5h19v16H.5z" fill="#050505" stroke="#8d8d8d" /><path d="M0 0h20v2.500H0z" fill="#c7ccd0" /><path d="M3 5.500h2M6 5v2M8 5l1.500 2.500M10.500 8h4" stroke="#e0e0e0" /></Icon>
      <Icon $ml={21} width="21" height="21" viewBox="0 0 21 21">
        <path d="M2 4l3 1 5-1 3-4 3 5c4 2 5 5 5 7a10 9 0 0 1-21 0c0-3 1-5 2-8z" fill="#fb6b22" /><path d="M13 0l3 5c4 3 4 6 3 9-2-4-5-7-6-14z" fill="#fdc52d" /><circle cx="10.500" cy="12" r="4.600" fill="#7a35d8" /><path d="M2 5c3-1 6 1 7 4-3 0-4 2-4 4-2-2-3-4-3-8z" fill="#fd3f50" />
      </Icon>
      <Icon $ml={20} width="21" height="21" viewBox="0 0 21 21">
        <path d="M0 0h8v7H0z" fill="#2a63d8" /><path d="M6 9V5a4.500 4.500 0 0 1 9 0v4" fill="none" stroke="#8f9499" strokeWidth="2" /><path d="M4 8h12v9H4z" fill="#55595e" /><path d="M12 13h8v8h-6z" fill="#3fbf3a" />
      </Icon>
      <Icon $ml={22} width="20" height="16" viewBox="0 0 20 16"><path d="M1 4c3-2 6 0 8 0l6-4 1 6c-1 4-5 6-9 5-3 0-5-3-6-7z" fill="#6c6459" /><path d="M13 10l7 6-9-4z" fill="#b7aa95" /><circle cx="7" cy="5" r="2" fill="#eee" /><circle cx="11.500" cy="4.500" r="1.800" fill="#eee" /></Icon>
      <Icon $ml={22} width="16" height="21" viewBox="0 0 16 21"><path d="M0 0h16v21H0z" fill="#6f7c86" /><path d="M2 2h12v4H2z" fill="#7fd8ee" /><path d="M2 8h3v3H2zM6.500 8h3v3h-3zM11 8h3v3h-3zM2 12.500h3v3H2zM6.500 12.500h3v3h-3zM2 17h3v2.500H2zM6.500 17h3v2.500h-3z" fill="#e8edf0" /><path d="M11 12.500h3v7h-3z" fill="#27487c" /></Icon>
      <Icon $ml={22} width="22" height="20" viewBox="0 0 22 20"><path d="M9 3c6 0 10 3 9 8s-6 4-7 5 0 3-4 3-7-4-7-8 4-8 9-8z" fill="#cfe6f2" /><circle cx="5" cy="8" r="1.800" fill="#3a9b48" /><circle cx="9.500" cy="6.500" r="1.800" fill="#d6362f" /><circle cx="4" cy="12.500" r="1.800" fill="#2d64c8" /><path d="M19 0l3 2-6 14-2 3 1-5z" fill="#c98b4b" /></Icon>
      <Task $ml={15} $w={53} $pad={4}><Folder /><Fit ml={8} w={25}>sli...</Fit></Task>
      <Task $ml={10} $w={53} $pad={4}><Folder /><Fit ml={8} w={25}>pr...</Fit></Task>
      <Icon $ml={15} width="21" height="21" viewBox="0 0 21 21"><path d="M5 0h11l5 10.500-5 10.500H5L0 10.500z" fill="#f6f8f8" /><path d="M3.500 6l4 8 4-8" fill="none" stroke="#1b9c86" strokeWidth="2.200" /><path d="M17 7.500a3.500 3.500 0 1 0 0 5" fill="none" stroke="#2b6f9c" strokeWidth="2" /><path d="M6 17h9" stroke="#333" strokeWidth="1.200" /></Icon>
      <Icon $ml={21} width="21" height="21" viewBox="0 0 21 21"><path d="M1 1l4-1 2 3v4l3 1 1-6 3-1 1 5 5 2 1 4-4 1 1 6-4-1-1-4-4 1-1 5-4-1 1-6-2-2H3z" fill="#a31621" /><path d="M8 9.500h6v3.500H8z" fill="#e8c8c8" opacity=".6" /></Icon>
      <Icon $ml={18} width="21" height="19" viewBox="0 0 21 19"><path d="M3.500 0H21l-3.500 19H0z" fill="#3c67c9" /><path d="M6 4l5.500 5.500L5 15M11 15h5" fill="none" stroke="#fff" strokeWidth="2" /></Icon>
      <Task $ml={16} $w={53} $pad={1}>
        <Icon width="20" height="20" viewBox="0 0 20 20"><path d="M0 12l6-4 4 4-5 5z" fill="#4c8ec9" /><path d="M6 8c4-1 4-8 6.500-8S17 12 20 17c-4-2-5 0-8 3-1-4-2-6-4-6z" fill="#d6542a" /><path d="M12 1c-1 5-1 12 0 19 1-4 2-12 0-19z" fill="#f4b24c" /></Icon>
        <Fit ml={4} w={25}>M...</Fit>
      </Task>
      <Task $ml={11} $w={52} $pad={1}>
        <Icon width="20" height="20" viewBox="0 0 20 20"><path d="M0 1h16v19H0z" fill="#e4e8ea" /><path d="M2 4h11M2 7h11M2 10h9M2 13h8M2 16h6" stroke="#7e868c" /><path d="M18 4l2 1-7 12-3 2 1-4z" fill="#d98a3a" /></Icon>
        <Fit ml={4} w={18}>E...</Fit>
      </Task>
      <Task $ml={12} $w={52} $pad={2}>
        <Icon width="18" height="21" viewBox="0 0 18 21"><path d="M4 0h10l4 4-2 11-7 6-7-6L0 4z" fill="#f2512b" /><path d="M9 4l5-.5 1.500 4-2 6L9 17l-4.500-3.500-2-6L4 3.500z" fill="#fff" /><path d="M5 8l3 1M13 8l-3 1M9 9v3M7 13l2-1 2 1" stroke="#f2512b" strokeWidth="1.300" fill="none" /></Icon>
        <Fit ml={5} w={25}>M...</Fit>
      </Task>
      <Icon $ml={16} width="20" height="22" viewBox="0 0 20 22"><path d="M9 0h11v9H9z" fill="#c9ced2" /><path d="M11 2h7v5h-7z" fill="#1c2bd0" /><path d="M0 11h11v8H0z" fill="#c9ced2" /><path d="M2 12.500h7v5H2z" fill="#1c2bd0" /><path d="M0 20h12v2H0z" fill="#e4e6e8" /><path d="M13 7l-7 6 5-1-3 4" stroke="#f3e41e" strokeWidth="1.800" fill="none" /></Icon>
      <Icon $ml={20} width="22" height="22" viewBox="0 0 22 22"><ellipse cx="11.500" cy="11" rx="7.500" ry="9.500" fill="none" stroke="#3d8fc4" strokeWidth="2.600" transform="rotate(-25 11 11)" /><path d="M0 8h6v6H0zM15 4h5v5h-5zM15 16h5v5h-5z" fill="#e87b26" /></Icon>
      <Icon $ml={18} width="22" height="24" viewBox="0 0 22 24" fill="none"><path d="M1 0v24" stroke="#e02020" strokeWidth="1.500" /><path d="M2.500 0v24" stroke="#22a83a" strokeWidth="1.500" /><circle cx="9" cy="12" r="2" fill="#0a0a0a" /><path d="M12 8c2 2 2 6 0 8M15 5c4 4 4 10 0 14M18 3c5 5 5 13 0 18" stroke="#0a0a0a" strokeWidth="1.800" /></Icon>
      <Task $ml={15} $w={52} $pad={3}>
        <Icon width="16" height="22" viewBox="0 0 16 22"><path d="M0 0h11l5 5v17H0z" fill="#f7f3f2" /><path d="M3 12c4-3 5-7 4.500-9.500C6 5 9 10 13 10.500c-3-1-7 0-10 1.500z" fill="none" stroke="#d32424" strokeWidth="1.300" /><text x="2.500" y="20" fontSize="6" fontWeight="700" fontFamily="Open Sans" fill="#333">PDF</text></Icon>
        <Fit ml={7} w={26}>ex...</Fit>
      </Task>
      <Task $ml={13} $w={52} $pad={1}><WordLogo /><Fit ml={4} w={19}>C...</Fit></Task>
      <Task $ml={11} $w={52} $pad={1}><WordLogo /><Fit ml={4} w={19}>C...</Fit></Task>
      <Task $ml={5} $w={64} $pad={8} $on><WordLogo /><Fit ml={3} w={19}>C...</Fit></Task>
      <Task $ml={5} $w={52} $pad={1}><WordLogo /><Fit ml={4} w={19}>C...</Fit></Task>
      <Task $ml={11} $w={52} $pad={1}><WordLogo /><Fit ml={4} w={19}>C...</Fit></Task>
      <Task $ml={13} $w={52} $pad={1}><ZoomLogo /><Fit ml={4} w={19}>Z...</Fit></Task>
      <Task $ml={11} $w={52} $pad={2}><ZoomLogo /><Fit ml={4} w={24}>M...</Fit></Task>
      <Icon $ml={17} width="18" height="10" viewBox="0 0 18 10" fill="none" stroke="#eef1f4" strokeWidth="1.400"><path d="M1 9.500l8-8.500 8 8.500" /></Icon>
      <Icon $ml={13} width="21" height="19" viewBox="0 0 21 19" fill="#fff"><path d="M5.200 0l5.200 3.300-5.200 3.300L0 3.300zM15.700 0L21 3.300l-5.300 3.300-5.200-3.300zM5.200 6.700l5.200 3.300-5.200 3.300L0 10zM15.700 6.700L21 10l-5.300 3.300-5.200-3.300zM10.500 12l5 3.300-5 3.300-5-3.300z" /></Icon>
      <Icon $ml={11} width="22" height="20" viewBox="0 0 22 20" fill="none" stroke="#eef1f4" strokeWidth="1.300"><path d="M1 7h3l5-5v16l-5-5H1zM12 7c1.500 2 1.500 4 0 6M15 4.500c3 3.500 3 7.500 0 11" /><path d="M18 2c4 5 4 11 0 16" stroke="#7e8390" /></Icon>
      <Fit ml={14} w={30} size={15}>ENG</Fit>
      <Fit ml={19} w={37} size={15}>11:45</Fit>
      <Icon $ml={26} width="22" height="22" viewBox="0 0 22 22"><path d="M0 0h22v17h-7.500L11 21.500 7.500 17H0z" fill="#fff" /><path d="M4 5h14M4 8.500h14M4 12h9" stroke="#171b2e" strokeWidth="1.500" /></Icon>
      <DesktopEdge />
    </Taskbar>
  );
}

const PEOPLE = [
  { tag: 'u', name: 'uceexue (me)', w: 82, color: '#38475f' },
  { tag: 'YA', name: 'Yiannis Andreopoulos (Host)', w: 173, color: '#cc5200', host: true },
  { tag: 'BA', name: 'Boxuan Alex Wang', w: 112, color: '#38475f' },
  { tag: 'FL', name: 'Feng LIU', w: 54, color: '#367fbe' },
  { tag: 'FK', name: 'Frederick K Owusu', w: 114, color: '#e99b09' },
  { tag: 'HZ', name: 'Hanwen Zhang', w: 90, color: '#2f9f80' },
  { tag: 'JW', name: 'Jingang Wu', w: 71, color: '#367fbe' },
];

const LOG: [string, number][] = [
  ['-1.6+Q/2 = -1.35', 99], ['-1.6 > 0.0 ---> NO', 110], ['1000 --> FAIL, so we go to 0100', 195],
  ['0100', 30], ['0110', 28], ['0101 --> is -1.35 > -1.5 --> YES', 191], ['final: -1.5 or 0101', 103],
];

const blue = '#436fd0';

function Sender({ name, w, mt }: { name: string; w: number; mt?: number }) {
  return (
    <From $mt={mt}>
      <Fit w={31}>From</Fit><Fit ml={3.5} w={w} color={blue}>{name}</Fit><Fit ml={3.5} w={12}>to</Fit><Fit ml={3.5} w={56} color={blue}>Everyone</Fit><span>:</span>
    </From>
  );
}

export default function App() {
  return (
    <Desktop>
      <Global />
      <Recording><RecDot /><Fit w={61} size={12.5} weight={600}>Recording</Fit></Recording>

      <Explorer>
        <ExpTitle>
          <Icon $ml={372} width="13" height="2"><path d="M0 .5h13" stroke="#888" /></Icon>
          <Icon $ml={48} width="14" height="14" viewBox="0 0 14 14" fill="none" stroke="#777"><path d="M.5 3.500h10v10H.5zM3.500 3.500v-3h10v10h-3" /></Icon>
          <Icon $ml={49} width="14" height="14" viewBox="0 0 14 14"><path d="M.5.5l13 13M13.500.5l-13 13" stroke="#888" /></Icon>
        </ExpTitle>
        <ExpRibbon>
          <Icon $ml={484} width="15" height="8" viewBox="0 0 15 8" fill="none" stroke="#8a8a8a" strokeWidth="1.500"><path d="M.5.5l7 7 7-7" /></Icon>
          <HelpDot>?</HelpDot>
        </ExpRibbon>
        <ExpBar>
          <AddressBox>
            <Icon $ml={57} width="12" height="8" viewBox="0 0 12 8" fill="none" stroke="#6e6e6e" strokeWidth="2.400"><path d="M1 1l5 5 5-5" /></Icon>
            <AddressDivider />
            <Icon $ml={15} width="14" height="15" viewBox="0 0 14 15" fill="none" stroke="#6e6e6e" strokeWidth="2"><path d="M9.500 3A5.500 5.500 0 1 1 3 4.500M1 1h4.500v5" /></Icon>
          </AddressBox>
          <ExpSearch>
            <Icon $ml={17} width="18" height="17" viewBox="0 0 18 17" fill="none" stroke="#8a8a8a" strokeWidth="1.300"><circle cx="11.500" cy="6" r="5.300" /><path d="M7.500 10L.5 16.500" /></Icon>
            <Fit ml={18} mt={2} w={269} size={15.5} color="#777">Search practice_questions_for_tutorial</Fit>
          </ExpSearch>
        </ExpBar>
        <ExpViews>
          <ViewSelected>
            <Icon width="18" height="18" viewBox="0 0 18 18" fill="none" stroke="#75787c">
              <path d="M5 2.500h6M12 2.500h6M5 6h6M12 6h6M5 9h6M12 9h6M5 12h6M12 12h6M5 15.500h6M12 15.500h6" /><path d="M0 .5h3v17H0z" stroke="#a58f8a" /><path d="M0 8.500h3" stroke="#d04a3a" />
            </Icon>
          </ViewSelected>
          <Icon $ml={4} width="19" height="15" viewBox="0 0 19 15"><path d="M.5.5h18v14H.5z" fill="#fff" stroke="#aaa" /><path d="M2 2h15v11H2z" fill="#5d93d8" /><path d="M2 6l8 3h7v4H2z" fill="#2c4a5e" /></Icon>
        </ExpViews>
      </Explorer>

      <Word>
        <WordTitleBar />
        <Tabs>
          <FileTab><Fit w={27}>FILE</Fit></FileTab>
          <HomeTab><Fit w={47}>HOME</Fit></HomeTab>
          {TABS.map(([label, ml, w]) => <Fit key={label} ml={ml} w={w}>{label}</Fit>)}
          <TabScroll><Icon width="5" height="9" viewBox="0 0 5 9"><path d="M0 0l5 4.500L0 9z" fill="#555" /></Icon></TabScroll>
        </Tabs>
        <Ribbon>
          <ClipboardGroup />
          <FontGroup />
          <ParagraphGroup />
          <StylesGroup />
          <EditingGroup />
          <RibbonEnd><Icon width="13" height="8" viewBox="0 0 13 8" fill="none" stroke="#555" strokeWidth="2"><path d="M1 7l5.500-5.500L12 7" /></Icon></RibbonEnd>
        </Ribbon>
        <Workspace>
          <TabPicker><Icon $ml={6} $mt={9} width="8" height="8"><path d="M1.500 0v6.500H8" fill="none" stroke="#555" strokeWidth="2.600" /></Icon></TabPicker>
          <HRuler><HorizontalRuler /></HRuler>
          <Scroll>
            <ScrollBtn><Icon width="10" height="6"><path d="M0 6l5-6 5 6z" fill="#666" /></Icon></ScrollBtn>
            <Thumb />
            <ScrollBtn><Icon width="10" height="6"><path d="M0 0l5 6 5-6z" fill="#666" /></Icon></ScrollBtn>
          </Scroll>
          <VRuler><VerticalRuler /></VRuler>
          <Canvas><Document /></Canvas>
        </Workspace>
        <IBeam width="13" height="24" viewBox="0 0 13 24" fill="none" stroke="#000" strokeWidth="2"><path d="M0 1.500h4.500l2 1.500 2-1.500H13M6.500 3v18M0 22.500h13" /></IBeam>
        <StatusBar />
      </Word>

      <TaskbarRow />

      <Chat>
        <ChatTitle />
        <ChatLog>
          <Sender name="Yinglin Chen" w={76} />
          <Fit w={322}>For question 1 ii), why does the frequency range from</Fit>
          <Fit mt={-0.5} w={44}>-1 to 1?</Fit>
          <Sender name="Yinglin Chen" w={76} mt={14.5} />
          <Fit w={21}>yes</Fit>
          <Sender name="Yiannis Andreopoulos" w={131} mt={14.5} />
          {LOG.map(([t, w]) => <Fit key={t} w={w}>{t}</Fit>)}
        </ChatLog>
        <ToRow>
          <Fit w={17}>To:</Fit>
          <ToPill><Fit w={51} size={12.5}>Everyone</Fit><Caret $ml={5} $color="#fff" /></ToPill>
        </ToRow>
        <Compose><Fit w={129}>Type message here...</Fit></Compose>
      </Chat>

      <Participants>
        <PTitle>
          <Light $c="#ed3b3b" /><Light $c="#f5b019" /><Light $c="#3dc72e" />
          <Fit ml={66} w={101} weight={400} color="#929292">Participants (20)</Fit>
        </PTitle>
        <PSearch>
          <Icon width="13" height="13" viewBox="0 0 13 13" fill="none" stroke="#e2e2e2" strokeWidth="1.200"><circle cx="5.500" cy="5.500" r="4.800" /><path d="M9 9l3.500 3.500" /></Icon>
          <TextCaret />
          <Fit w={39} color="#8a8a8a">Search</Fit>
        </PSearch>
        <PBody>
          <PList>
            {PEOPLE.map(p => (
              <PRow key={p.name}>
                <Avatar $c={p.color}>{p.tag}</Avatar>
                <Fit w={p.w}>{p.name}</Fit>
                <PIcons>
                  {p.host && (
                    <>
                      <Icon width="14" height="11" viewBox="0 0 14 11"><path d="M3 11a3 3 0 0 1-.8-5.800A4.600 4.600 0 0 1 11 4.300 3.300 3.300 0 0 1 11 11z" fill="#f4f0f1" /><circle cx="7" cy="6.700" r="2" fill="#e03040" /></Icon>
                      <Icon $ml={9} width="16" height="12" viewBox="0 0 16 12"><rect width="16" height="12" rx="1.500" fill="#3fd43c" /><path d="M8 9.500v-6M5.500 5.500L8 3l2.500 2.500" fill="none" stroke="#12300f" strokeWidth="1.500" /></Icon>
                      <FitSpan $ml={11} />
                      <MicOn />
                    </>
                  )}
                  {!p.host && <MicOff />}
                  <CamOff />
                </PIcons>
              </PRow>
            ))}
          </PList>
          <PTrack><PThumb /></PTrack>
        </PBody>
        <PFooter>
          <PButton $w={58}><Fit w={31}>Invite</Fit></PButton>
          <PButton $w={80} $ml={39}><Fit w={65}>Unmute Me</Fit></PButton>
          <PButton $w={78} $ml={39}><Fit w={64}>Raise Hand</Fit></PButton>
        </PFooter>
      </Participants>
    </Desktop>
  );
}
